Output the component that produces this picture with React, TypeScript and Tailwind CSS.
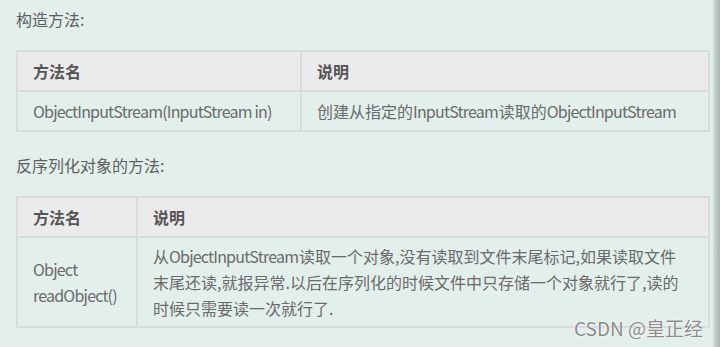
import React from 'react';

const FONT = { fontFamily: '"Noto Sans CJK SC", "Noto Sans", sans-serif' };

function Txt({ s }: { s: string }) {
  const parts = s.split(/([\x21-\x7E](?:[\x20-\x7E]*[\x21-\x7E])?)/);
  return (
    <>
      {parts.map((p, i) =>
        i % 2 === 1 && p.length > 1 ? (
          <React.Fragment key={i}>
            <span className="tracking-[-0.8px]">{p.slice(0, -1)}</span>
            {p.slice(-1)}
          </React.Fragment>
        ) : (
          <React.Fragment key={i}>{p}</React.Fragment>
        ),
      )}
    </>
  );
}

function Lines({ lines }: { lines: string[] }) {
  return (
    <>
      {lines.map((l, i) => (
        <div key={i} className="whitespace-nowrap">
          <Txt s={l} />
        </div>
      ))}
    </>
  );
}

type Row = { name: React.ReactNode; desc: React.ReactNode };

function MethodTable({ rows, firstCol, padY }: { rows: Row[]; firstCol: string; padY: string }) {
  return (
    <table className="w-[694px] table-fixed border-collapse border-2 border-[#d9dcdc] text-[16px] leading-[26px]">
      <colgroup>
        <col className={firstCol} />
        <col />
      </colgroup>
      <thead>
        <tr className="bg-[#ebebeb]">
          <th className="border-2 border-[#d9dcdc] px-[15px] py-[6px] text-left font-bold text-[#555555]">方法名</th>
          <th className="border-2 border-[#d9dcdc] px-[15px] py-[6px] text-left font-bold text-[#555555]">说明</th>
        </tr>
      </thead>
      <tbody>
        {rows.map((r, i) => (
          <tr key={i}>
            <td className={`border-2 border-[#d9dcdc] px-[15px] ${padY} align-middle text-[#6a6a6a]`}>{r.name}</td>
            <td className={`border-2 border-[#d9dcdc] px-[15px] ${padY} align-middle text-[#6a6a6a]`}>{r.desc}</td>
          </tr>
        ))}
      </tbody>
    </table>
  );
}

export default function App() {
  return (
    <div className="relative flex h-[347px] w-[720px] overflow-hidden bg-[#e3efeb]" style={FONT}>
      <div className="flex-1 pl-[16px] pt-[6px]">
        <p className="text-[16px] leading-[26px] text-[#5f5f5f]">构造方法:</p>
        <div className="mt-[18px]">
          <MethodTable
            firstCol="w-[284px]"
            padY="py-[6px]"
            rows={[
              {
                name: <Txt s="ObjectInputStream(InputStream in)" />,
                desc: <Txt s="创建从指定的InputStream读取的ObjectInputStream" />,
              },
            ]}
          />
        </div>
        <p className="mt-[20px] text-[16px] leading-[26px] text-[#5f5f5f]">反序列化对象的方法:</p>
        <div className="mt-[18px]">
          <MethodTable
            firstCol="w-[120px]"
            padY="py-[5px]"
            rows={[
              {
                name: <Lines lines={['Object', 'readObject()']} />,
                desc: (
                  <Lines
                    lines={[
                      '从ObjectInputStream读取一个对象,没有读取到文件末尾标记,如果读取文件',
                      '末尾还读,就报异常.以后在序列化的时候文件中只存储一个对象就行了,读的',
                      '时候只需要读一次就行了.',
                    ]}
                  />
                ),
              },
            ]}
          />
        </div>
      </div>
      <div className="w-[7px] bg-gradient-to-r from-[#d3dfdb] via-[#bcc8c4] to-[#a9b5b1]" />
      <div
        className="absolute right-[17px] bottom-[6px] text-[19px] leading-[26px] text-[#8c8c8c]"
        style={{ textShadow: '0 0 2px #ffffff, 0 0 1px #ffffff' }}
      >
        CSDN @皇正经
      </div>
    </div>
  );
}
